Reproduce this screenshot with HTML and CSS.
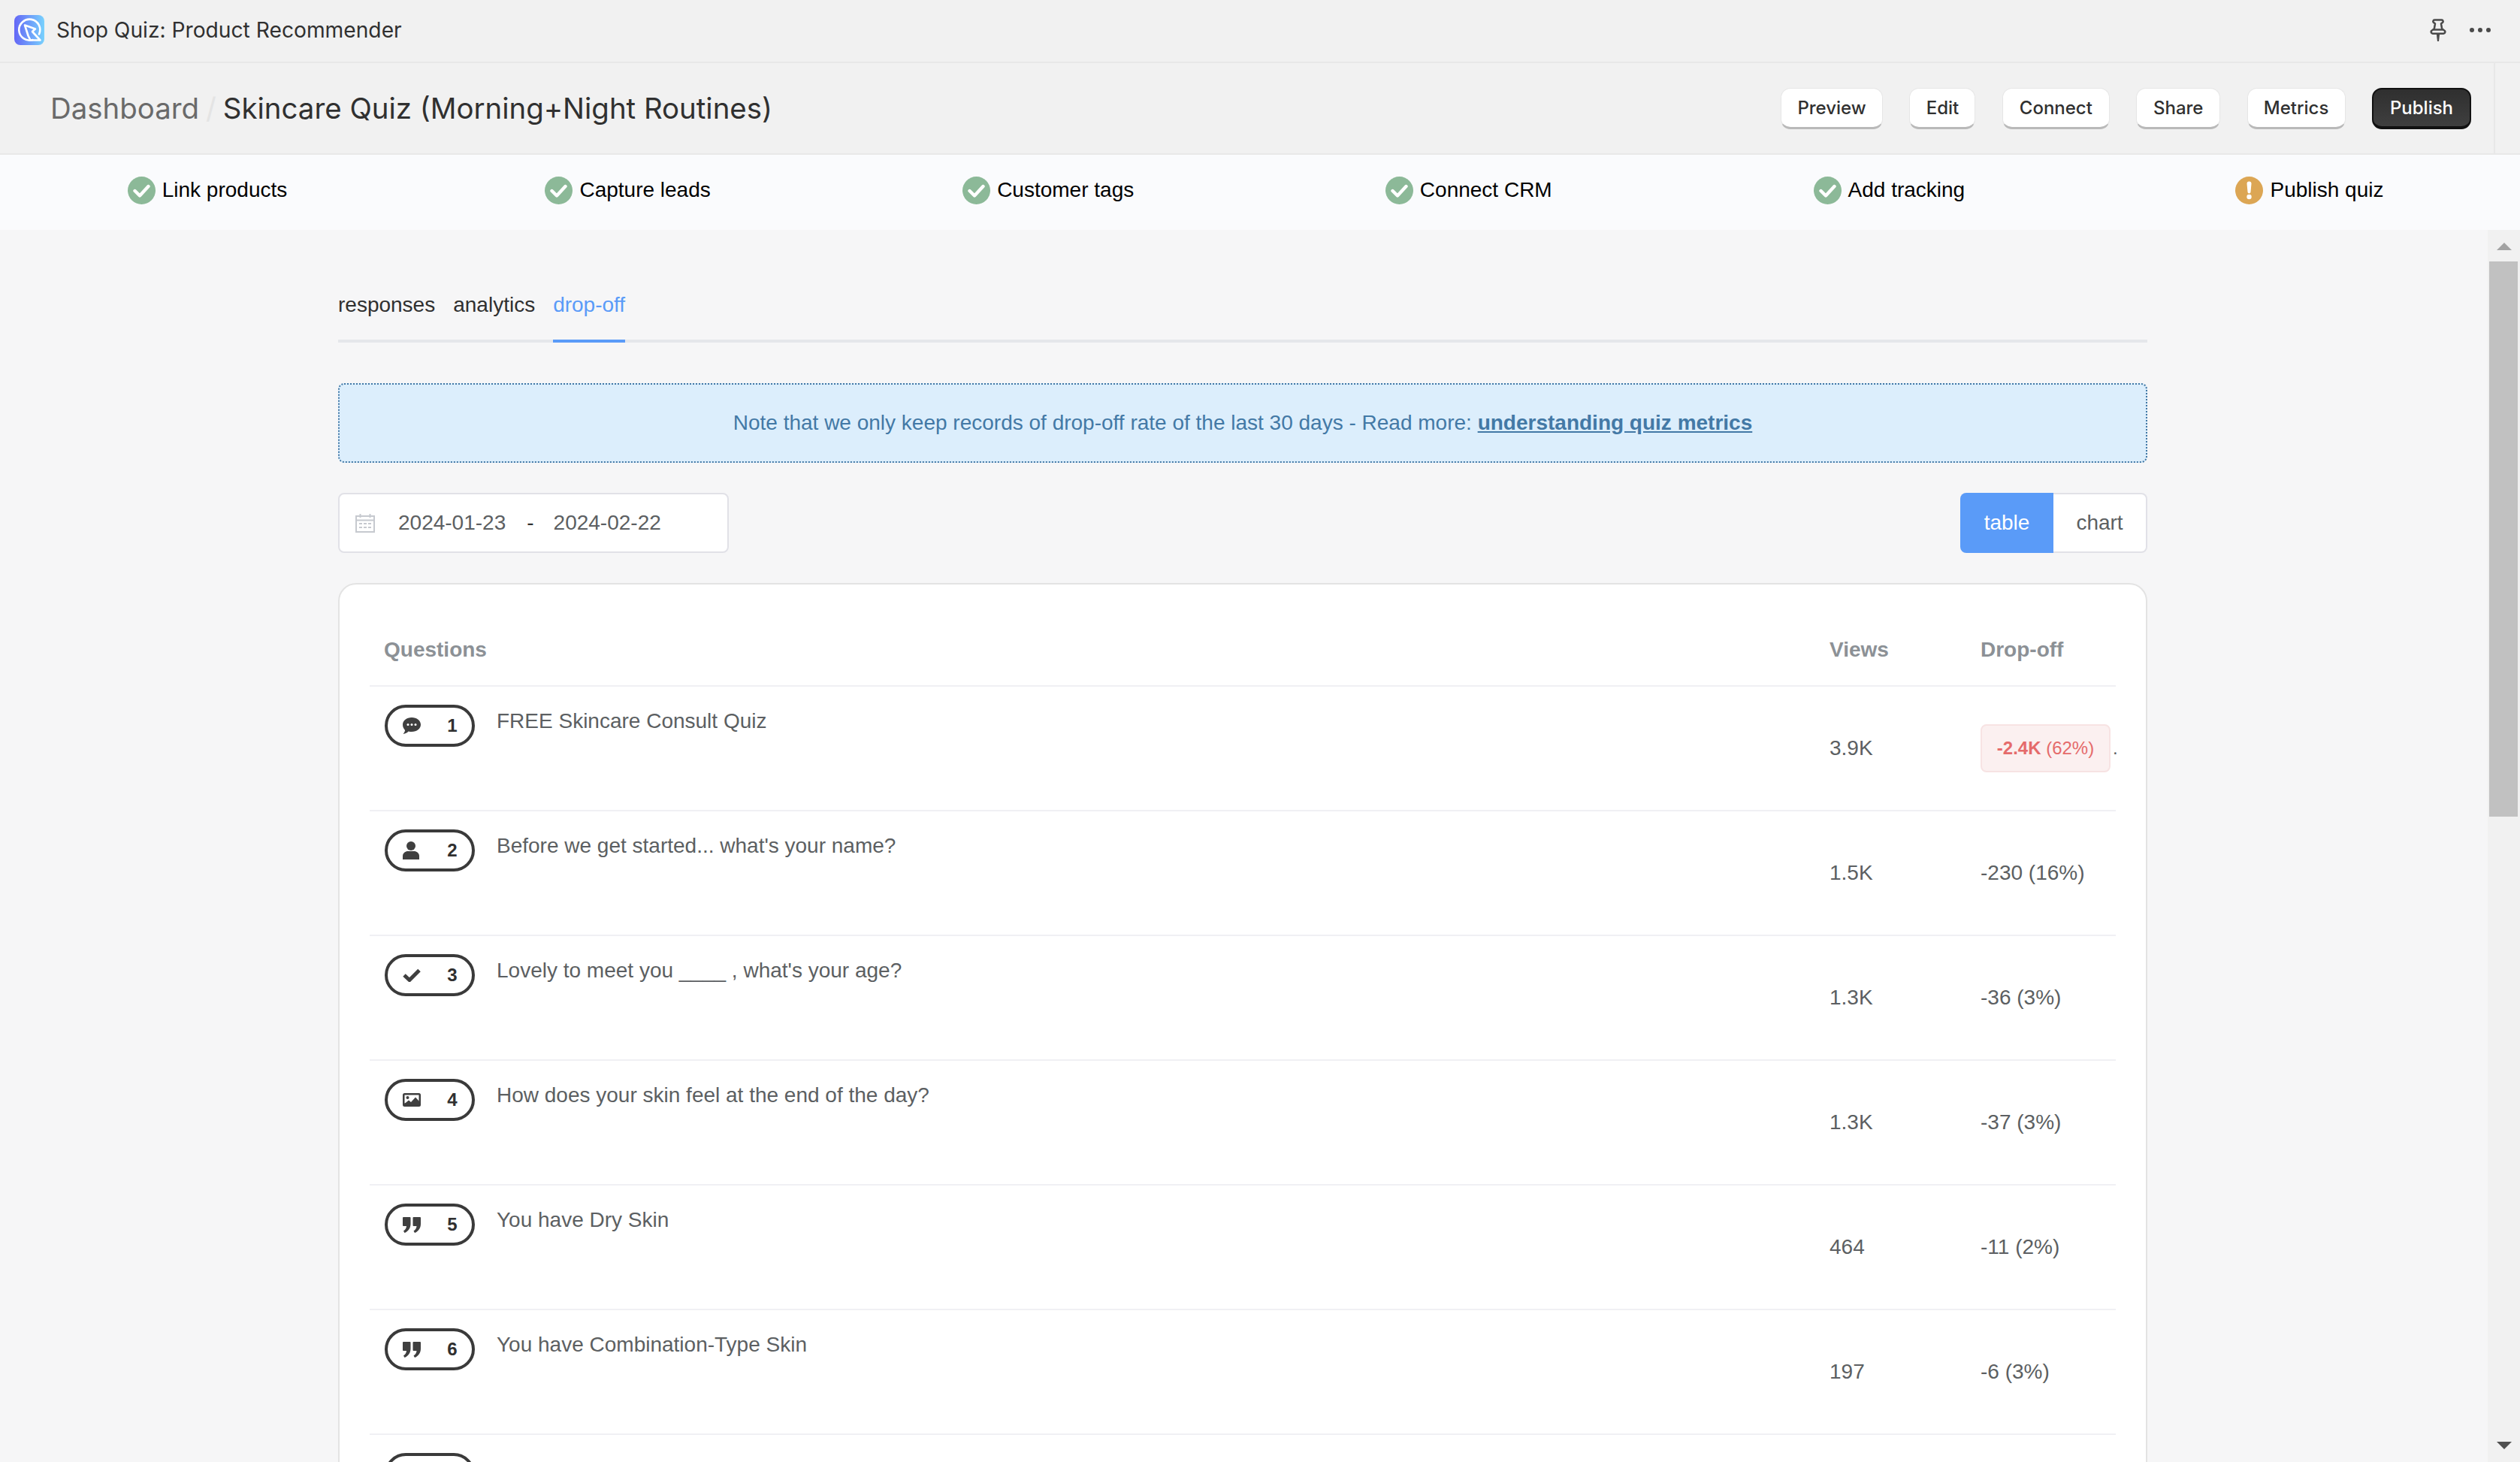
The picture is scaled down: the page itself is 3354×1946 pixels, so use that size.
FILE: index.html
```html
<!DOCTYPE html>
<html lang="en">
<head>
<meta charset="utf-8">
<title>Shop Quiz: Product Recommender</title>
<link rel="stylesheet" href="styles.css">
</head>
<body>
<svg class="defs" width="0" height="0" aria-hidden="true">
  <defs>
    <linearGradient id="logo-grad" x1="0" y1="0" x2="1" y2="0">
      <stop offset="0" stop-color="#6466f6"/>
      <stop offset="1" stop-color="#78d2fd"/>
    </linearGradient>
    <symbol id="ok" viewBox="0 0 37 37">
      <circle cx="18.5" cy="18.5" r="18.5" fill="#8cb998"/>
      <path d="M9.5 19l6.5 6.5L27.5 13" fill="none" stroke="#fff" stroke-width="4.4" stroke-linecap="round" stroke-linejoin="round"/>
    </symbol>
    <symbol id="quote" viewBox="0 0 24 21">
      <path fill="#3f3f3f" d="M1 0h8.500a1 1 0 0 1 1 1v8c0 5.500-3 10-8 12l-1.500-2.600c2.400-1.200 3.800-3.400 4-6.400H1a1 1 0 0 1-1-1V1a1 1 0 0 1 1-1z"/>
      <path fill="#3f3f3f" d="M14.500 0H23a1 1 0 0 1 1 1v8c0 5.500-3 10-8 12l-1.500-2.600c2.400-1.200 3.800-3.400 4-6.400h-4a1 1 0 0 1-1-1V1a1 1 0 0 1 1-1z"/>
    </symbol>
  </defs>
</svg>

<header class="topbar">
  <div class="app-title">
    <svg class="logo" viewBox="0 0 40 40" aria-hidden="true">
      <rect width="40" height="40" rx="8" fill="url(#logo-grad)"/>
      <path d="M33 25.500A14 14 0 1 0 24.500 33" fill="none" stroke="#fff" stroke-width="2.600" stroke-linecap="round"/>
      <path d="M14 13.500L28 18.500 24 22 34.500 33.500H21.500L18.500 27.500Z" fill="none" stroke="#fff" stroke-width="2.600" stroke-linejoin="round"/>
    </svg>
    <span>Shop Quiz: Product Recommender</span>
  </div>
  <div class="app-tools">
    <svg class="pin" viewBox="0 0 22 30" aria-hidden="true">
      <path d="M6.500 1.500h9a2 2 0 0 1 1 3.800L15 6.500l1 6c.3 1.500 1.500 2 3 2.800a2.300 2.300 0 0 1-.8 4.400H3.800A2.300 2.300 0 0 1 3 15.300c1.500-.8 2.700-1.300 3-2.800l1-6-1.500-1.200a2 2 0 0 1 1-3.800zM4 14.500h14" fill="none" stroke="#4a4a4a" stroke-width="2.500" stroke-linejoin="round"/>
      <path d="M8.800 20h4.400L12 30h-2z" fill="#4a4a4a"/>
    </svg>
    <div class="dots"><i></i><i></i><i></i></div>
  </div>
</header>

<section class="subhead">
  <div class="crumbs">
    <span class="crumb-root">Dashboard</span>
    <span class="crumb-sep">/</span>
    <span class="crumb-page">Skincare Quiz (Morning+Night Routines)</span>
  </div>
  <div class="actions">
    <button class="btn btn-preview">Preview</button>
    <button class="btn btn-edit">Edit</button>
    <button class="btn btn-connect">Connect</button>
    <button class="btn btn-share">Share</button>
    <button class="btn btn-metrics">Metrics</button>
    <button class="btn btn-primary">Publish</button>
  </div>
</section>

<nav class="steps">
  <div class="step"><svg class="step-icon"><use href="#ok"/></svg>Link products</div>
  <div class="step"><svg class="step-icon"><use href="#ok"/></svg>Capture leads</div>
  <div class="step"><svg class="step-icon"><use href="#ok"/></svg>Customer tags</div>
  <div class="step"><svg class="step-icon"><use href="#ok"/></svg>Connect CRM</div>
  <div class="step"><svg class="step-icon"><use href="#ok"/></svg>Add tracking</div>
  <div class="step">
    <svg class="step-icon" viewBox="0 0 37 37" aria-hidden="true">
      <circle cx="18.500" cy="18.500" r="18.500" fill="#dca654"/>
      <path d="M15.500 9.500a3 3 0 0 1 6 0l-1 11a2 2 0 0 1-4 0z" fill="#fff"/>
      <circle cx="18.500" cy="27" r="3.200" fill="#fff"/>
    </svg>Publish quiz
  </div>
</nav>

<div class="workspace">
  <main class="content">
    <div class="tabs">
      <span class="tab">responses</span>
      <span class="tab">analytics</span>
      <span class="tab tab-active">drop-off</span>
    </div>

    <p class="notice">Note that we only keep records of drop-off rate of the last 30 days - Read more: <a class="notice-link" href="#">understanding quiz metrics</a></p>

    <div class="controls">
      <div class="dates">
        <svg class="cal" viewBox="0 0 26 26" aria-hidden="true">
          <path d="M1 4h24v21H1zM1 9.500h24M6.500 1v5M19.500 1v5" fill="none" stroke="#c6c9cf" stroke-width="2"/>
          <path d="M5 13h4v2H5zM11 13h4v2h-4zM17 13h4v2h-4zM5 18h4v2H5zM11 18h4v2h-4zM17 18h4v2h-4z" fill="#c6c9cf"/>
        </svg>
        <span class="date">2024-01-23</span>
        <span class="date-sep">-</span>
        <span class="date">2024-02-22</span>
      </div>
      <div class="toggle">
        <span class="toggle-item toggle-on">table</span>
        <span class="toggle-item">chart</span>
      </div>
    </div>

    <section class="card">
      <div class="row row-head">
        <span class="head-q">Questions</span>
        <span>Views</span>
        <span>Drop-off</span>
      </div>

      <div class="row">
        <div class="q">
          <span class="badge">
            <svg class="bi bi-chat" viewBox="0 0 24 22" aria-hidden="true">
              <path d="M12 0c6.600 0 12 3.900 12 9.500S18.600 19 12 19c-1.500 0-3-.2-4.300-.6C6 20 3.500 21.600.5 22c1.200-1.300 2.300-3 2.600-5.100C1.200 15 0 12.500 0 9.500 0 3.900 5.400 0 12 0z" fill="#3f3f3f"/>
              <circle cx="7" cy="9.500" r="1.500" fill="#fff"/><circle cx="12" cy="9.500" r="1.500" fill="#fff"/><circle cx="17" cy="9.500" r="1.500" fill="#fff"/>
            </svg>
            <b class="num">1</b>
          </span>
          <span class="q-text">FREE Skincare Consult Quiz</span>
        </div>
        <span class="val">3.9K</span>
        <span class="val val-alert"><span class="alert"><b>-2.4K</b> (62%)</span><span class="alert-dot">.</span></span>
      </div>

      <div class="row">
        <div class="q">
          <span class="badge">
            <svg class="bi bi-user" viewBox="0 0 22 24" aria-hidden="true">
              <circle cx="11" cy="6" r="6" fill="#3f3f3f"/>
              <path d="M0 24v-4.500C0 15.500 3.500 13 7 13h8c3.500 0 7 2.500 7 6.500V24z" fill="#3f3f3f"/>
            </svg>
            <b class="num">2</b>
          </span>
          <span class="q-text">Before we get started... what's your name?</span>
        </div>
        <span class="val">1.5K</span>
        <span class="val">-230 (16%)</span>
      </div>

      <div class="row">
        <div class="q">
          <span class="badge">
            <svg class="bi bi-check" viewBox="0 0 24 18" aria-hidden="true">
              <path d="M2 9l7 6.500L22 2.500" fill="none" stroke="#3f3f3f" stroke-width="5"/>
            </svg>
            <b class="num">3</b>
          </span>
          <span class="q-text">Lovely to meet you ____ , what's your age?</span>
        </div>
        <span class="val">1.3K</span>
        <span class="val">-36 (3%)</span>
      </div>

      <div class="row">
        <div class="q">
          <span class="badge">
            <svg class="bi bi-image" viewBox="0 0 24 18" aria-hidden="true">
              <rect width="24" height="18" rx="2.500" fill="#3f3f3f"/>
              <rect x="2.500" y="2.500" width="19" height="11" fill="#fff"/>
              <path d="M2.500 14l5.500-4.500 3 2.500 6-6.500 5 5.500v3.500H2z" fill="#3f3f3f"/>
              <circle cx="6.500" cy="6" r="2" fill="#3f3f3f"/>
            </svg>
            <b class="num">4</b>
          </span>
          <span class="q-text">How does your skin feel at the end of the day?</span>
        </div>
        <span class="val">1.3K</span>
        <span class="val">-37 (3%)</span>
      </div>

      <div class="row">
        <div class="q">
          <span class="badge"><svg class="bi bi-quote"><use href="#quote"/></svg><b class="num">5</b></span>
          <span class="q-text">You have Dry Skin</span>
        </div>
        <span class="val">464</span>
        <span class="val">-11 (2%)</span>
      </div>

      <div class="row">
        <div class="q">
          <span class="badge"><svg class="bi bi-quote"><use href="#quote"/></svg><b class="num">6</b></span>
          <span class="q-text">You have Combination-Type Skin</span>
        </div>
        <span class="val">197</span>
        <span class="val">-6 (3%)</span>
      </div>

      <div class="row">
        <div class="q">
          <span class="badge"></span>
        </div>
      </div>
    </section>
  </main>

  <aside class="scrollbar" aria-hidden="true">
    <span class="arrow arrow-up"></span>
    <span class="thumb"></span>
    <span class="arrow arrow-down"></span>
  </aside>
</div>
</body>
</html>
```

FILE: styles.css
```css
* { box-sizing: border-box; }

html, body {
  margin: 0;
  height: 1946px;
  overflow: hidden;
}

body {
  display: flex;
  flex-direction: column;
  background: #f6f6f7;
  font-family: "Liberation Sans", Arial, sans-serif;
  color: #303030;
}

.defs { position: absolute; }

/* app title bar */
.topbar {
  flex: 0 0 84px;
  display: flex;
  align-items: center;
  justify-content: space-between;
  padding: 0 39px 2px 19px;
  background: #f1f1f1;
  border-bottom: 2px solid #e8e8e8;
}
.app-title {
  display: flex;
  align-items: center;
  gap: 16px;
  font-family: Inter, sans-serif;
  font-size: 28.200px;
  color: #303030;
}
.logo { width: 40px; height: 40px; display: block; }
.app-tools { display: flex; align-items: center; gap: 31px; }
.pin { width: 22px; height: 30px; display: block; }
.dots { display: flex; gap: 5px; }
.dots i { width: 6px; height: 6px; border-radius: 50%; background: #4a4a4a; }

/* breadcrumb + actions */
.subhead {
  flex: 0 0 122px;
  display: flex;
  align-items: center;
  justify-content: space-between;
  padding: 0 65px 0 67px;
  background: #f1f1f1;
  border-bottom: 2px solid #e8e8e8;
  position: relative;
}
.subhead::after {
  content: "";
  position: absolute;
  top: 0;
  bottom: 0;
  left: 3319px;
  width: 2px;
  background: #e8e8e8;
}
.crumbs {
  display: flex;
  align-items: baseline;
  font-family: Inter, sans-serif;
  font-size: 38.400px;
}
.crumb-root { color: #6a6a6a; }
.crumb-sep { color: #e4e4e4; margin: 0 9px; }
.crumb-page { color: #303030; }

.actions { display: flex; gap: 35.400px; }
.btn {
  height: 55px;
  padding: 0;
  font-family: Inter, sans-serif;
  font-size: 24px;
  font-weight: 500;
  color: #303030;
  background: #fff;
  border: 1px solid #e6e6e6;
  border-bottom: 3px solid #b9b9b9;
  border-radius: 13px;
}
.btn-preview { width: 136px; }
.btn-edit { width: 88px; }
.btn-connect { width: 143px; }
.btn-share { width: 112px; }
.btn-metrics { width: 131px; }
.btn-primary {
  width: 132px;
  color: #fff;
  background: linear-gradient(#2f2f2f, #3f3f3f);
  border: 2px solid #111;
  border-bottom-width: 4px;
}

/* setup steps */
.steps {
  flex: 0 0 100px;
  display: grid;
  grid-template-columns: repeat(6, 500px);
  column-gap: 59.600px;
  align-items: center;
  padding: 0 0 6px 26px;
  background: #fafbfd;
  color: #000;
  font-size: 28px;
}
.step { display: flex; align-items: center; justify-content: center; gap: 9px; }
.step-icon { width: 37px; height: 37px; display: block; }

/* main area */
.workspace {
  flex: 1;
  min-height: 0;
  display: flex;
}
.content {
  flex: 1;
  min-width: 0;
  overflow: hidden;
  padding: 0 453px 0 450px;
}

.tabs {
  display: flex;
  gap: 24px;
  height: 150px;
  padding-top: 78px;
  border-bottom: 4px solid #e5e7eb;
  font-size: 28px;
  color: #303030;
}
.tab { height: 72px; line-height: 44px; margin-bottom: -4px; }
.tab-active { color: #5a9bf8; border-bottom: 4px solid #5a9bf8; }

.notice {
  margin: 54px 0 40px;
  height: 106px;
  display: flex;
  align-items: center;
  justify-content: center;
  white-space: pre-wrap;
  background: #dceefc;
  border: 2px dotted #4379a6;
  border-radius: 8px;
  font-size: 28px;
  color: #4379a6;
}
.notice-link { font-weight: 700; color: #4379a6; text-decoration: underline; }

.controls {
  display: flex;
  justify-content: space-between;
  height: 80px;
  margin-bottom: 40px;
}
.dates {
  width: 520px;
  display: flex;
  align-items: center;
  padding-left: 21px;
  background: #fff;
  border: 2px solid #e1e1e7;
  border-radius: 8px;
  font-size: 28px;
  color: #5c5f62;
}
.cal { width: 26px; height: 26px; display: block; margin-right: 31px; }
.date-sep { margin: 0 26px 0 28px; color: #303030; }
.toggle { display: flex; font-size: 28px; }
.toggle-item {
  width: 125px;
  display: flex;
  align-items: center;
  justify-content: center;
  background: #fff;
  color: #5c5f62;
  border: 2px solid #e1e1e7;
  border-left: 0;
  border-radius: 0 8px 8px 0;
}
.toggle-on {
  width: 124px;
  background: #5a9bf8;
  color: #fff;
  border: 0;
  border-radius: 8px 0 0 8px;
}

.card {
  height: 1400px;
  padding: 0 40px;
  background: #fff;
  border: 2px solid #e3e3e3;
  border-radius: 24px;
}

.row {
  height: 166px;
  display: grid;
  grid-template-columns: 1943px 201px 1fr;
  align-items: center;
  border-bottom: 2px solid #f0f0f4;
}
.row-head {
  height: 136px;
  align-items: end;
  padding-bottom: 23px;
  font-size: 28px;
  font-weight: 700;
  line-height: 48px;
  color: #8c9196;
}
.head-q { padding-left: 19px; }

.q {
  align-self: start;
  display: flex;
  align-items: flex-start;
  gap: 29px;
  padding: 24px 0 0 20px;
}
.badge {
  flex: none;
  width: 120px;
  height: 56px;
  display: flex;
  align-items: center;
  padding-left: 20px;
  border: 4px solid #3a3a3a;
  border-radius: 28px;
}
.bi { display: block; flex: none; width: 24px; }
.bi-chat { height: 22px; }
.bi-user { height: 24px; width: 22px; margin-right: 2px; }
.bi-check { height: 18px; }
.bi-image { height: 18px; }
.bi-quote { height: 21px; }
.num {
  margin-left: 35px;
  width: 14px;
  text-align: center;
  font-size: 24px;
  color: #303030;
}
.q-text {
  font-size: 28px;
  line-height: 44px;
  color: #5c5f62;
  white-space: nowrap;
}
.val { font-size: 28px; color: #5c5f62; }
.val-alert { display: flex; align-items: baseline; gap: 3px; }
.alert {
  width: 173px;
  height: 64px;
  display: flex;
  align-items: center;
  justify-content: center;
  white-space: pre;
  font-size: 24px;
  color: #e56b6b;
  background: #fbf0f0;
  border: 2px solid #f7e3e3;
  border-radius: 8px;
}
.alert-dot { font-size: 24px; }

/* page scrollbar */
.scrollbar {
  flex: 0 0 43px;
  display: flex;
  flex-direction: column;
  align-items: center;
  background: #f1f1f1;
  padding: 17px 0 17px;
}
.arrow {
  width: 0;
  height: 0;
  border-left: 10px solid transparent;
  border-right: 10px solid transparent;
}
.arrow-up { border-bottom: 10px solid #a3a3a3; }
.arrow-down { border-top: 10px solid #505050; margin-top: auto; }
.thumb {
  width: 38px;
  height: 739px;
  margin-top: 15px;
  margin-right: 1px;
  background: #c1c1c1;
}
```
